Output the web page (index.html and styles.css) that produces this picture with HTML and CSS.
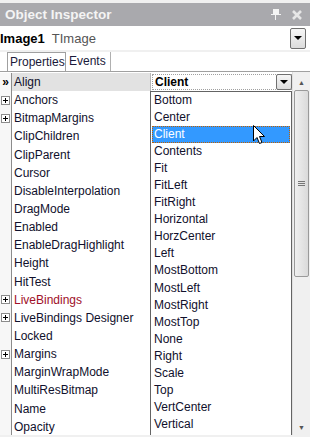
FILE: index.html
```html
<!DOCTYPE html>
<html lang="en">
<head>
    <meta charset="UTF-8">
    <title>Object Inspector</title>
    <link rel="stylesheet" href="styles.css">
</head>
<body>
    <div class="inspector">
        <div class="titlebar">
            <span class="title">Object Inspector</span>
            <span class="title-icons">
                <svg width="10" height="11" viewBox="0 0 10 11"><rect x="2" y="0" width="6" height="6" fill="#f4f4f4"/><rect x="0" y="5" width="10" height="1" fill="#f4f4f4"/><rect x="4" y="6" width="1" height="5" fill="#f4f4f4"/></svg>
                <svg width="10" height="10" viewBox="0 0 10 10"><path d="M1 1 L9 9 M9 1 L1 9" stroke="#e6e6e6" stroke-width="2.6"/></svg>
            </span>
        </div>

        <div class="selector">
            <span class="obj-name">Image1</span>
            <span class="obj-type">TImage</span>
            <span class="drop-btn big"><i class="tri"></i></span>
        </div>

        <div class="tabs">
            <span class="tab active">Properties</span>
            <span class="tab events">Events</span>
        </div>

        <div class="grid">
            <div class="rows">
                <div class="row selected"><span class="gut">&raquo;</span><span class="name">Align</span><span class="value"><span class="combo"><b>Client</b><span class="drop-btn"><i class="tri"></i></span></span></span></div>
                <div class="row"><span class="gut"><i class="plus"></i></span><span class="name">Anchors</span></div>
                <div class="row"><span class="gut"><i class="plus"></i></span><span class="name">BitmapMargins</span></div>
                <div class="row"><span class="gut"></span><span class="name">ClipChildren</span></div>
                <div class="row"><span class="gut"></span><span class="name">ClipParent</span></div>
                <div class="row"><span class="gut"></span><span class="name">Cursor</span></div>
                <div class="row"><span class="gut"></span><span class="name">DisableInterpolation</span></div>
                <div class="row"><span class="gut"></span><span class="name">DragMode</span></div>
                <div class="row"><span class="gut"></span><span class="name">Enabled</span></div>
                <div class="row"><span class="gut"></span><span class="name">EnableDragHighlight</span></div>
                <div class="row"><span class="gut"></span><span class="name">Height</span></div>
                <div class="row"><span class="gut"></span><span class="name">HitTest</span></div>
                <div class="row"><span class="gut"><i class="plus"></i></span><span class="name link">LiveBindings</span></div>
                <div class="row"><span class="gut"><i class="plus"></i></span><span class="name">LiveBindings Designer</span></div>
                <div class="row"><span class="gut"></span><span class="name">Locked</span></div>
                <div class="row"><span class="gut"><i class="plus"></i></span><span class="name">Margins</span></div>
                <div class="row"><span class="gut"></span><span class="name">MarginWrapMode</span></div>
                <div class="row"><span class="gut"></span><span class="name">MultiResBitmap</span></div>
                <div class="row"><span class="gut"></span><span class="name">Name</span></div>
                <div class="row"><span class="gut"></span><span class="name">Opacity</span></div>

                <ul class="droplist">
                    <li>Bottom</li>
                    <li>Center</li>
                    <li class="hot">Client</li>
                    <li>Contents</li>
                    <li>Fit</li>
                    <li>FitLeft</li>
                    <li>FitRight</li>
                    <li>Horizontal</li>
                    <li>HorzCenter</li>
                    <li>Left</li>
                    <li>MostBottom</li>
                    <li>MostLeft</li>
                    <li>MostRight</li>
                    <li>MostTop</li>
                    <li>None</li>
                    <li>Right</li>
                    <li>Scale</li>
                    <li>Top</li>
                    <li>VertCenter</li>
                    <li>Vertical</li>
                </ul>

                <svg class="cursor" width="13" height="20" viewBox="0 0 13 20"><path d="M0.5 0.5 L0.5 16 L4 12.5 L6.5 18.5 L9 17.5 L6.5 11.5 L11.5 11.5 Z" fill="#fff" stroke="#000" stroke-width="1"/></svg>
            </div>

            <div class="scrollbar">
                <span class="arrow">&#9650;</span>
                <div class="track">
                    <div class="thumb"><i class="grip"></i></div>
                </div>
                <span class="arrow">&#9660;</span>
            </div>
        </div>
    </div>
</body>
</html>
```

FILE: styles.css
```css
* {
    margin: 0;
    padding: 0;
    box-sizing: border-box;
}

body {
    font-family: "Liberation Sans", Arial, sans-serif;
    font-size: 12px;
    background: #f0f0f0;
    width: 310px;
    height: 437px;
    overflow: hidden;
}

.inspector {
    padding-top: 3px;
}

.titlebar {
    height: 23px;
    background: #a9a9ad;
    display: flex;
    align-items: center;
    justify-content: space-between;
    padding: 0 8px 0 5px;
}

.title {
    color: #f4f4f4;
    font-weight: bold;
    font-size: 13.5px;
}

.title-icons {
    display: flex;
    gap: 11px;
    align-items: center;
}

.selector {
    height: 24px;
    background: #fff;
    display: flex;
    align-items: center;
    padding-right: 4px;
    font-size: 13px;
}

.obj-name {
    font-weight: bold;
    color: #000;
}

.obj-type {
    color: #555;
    margin-left: 7px;
    flex: 1;
}

.drop-btn {
    width: 16px;
    height: 16px;
    border: 1px solid #707070;
    border-radius: 2px;
    background: linear-gradient(#f6f6f6, #dcdcdc);
    display: flex;
    align-items: center;
    justify-content: center;
}

.drop-btn.big {
    height: 21px;
}

.tri {
    width: 0;
    height: 0;
    border-left: 4px solid transparent;
    border-right: 4px solid transparent;
    border-top: 4px solid #000;
}

.tabs {
    margin-top: 2px;
    height: 20px;
    background: #fff;
    border-bottom: 1px solid #a0a0a0;
    display: flex;
    align-items: flex-end;
    padding-left: 7px;
}

.tab {
    height: 19px;
    width: 45px;
    padding-left: 3px;
    line-height: 18px;
    color: #1a1a3a;
    border-right: 1px solid #b0b0b0;
    white-space: nowrap;
}

.tab.active {
    width: 59px;
    border: 1px solid #a0a0a0;
    border-bottom: none;
    background: #fff;
    padding-left: 2px;
}

.grid {
    display: flex;
    height: 363px;
    background: #fff;
}

.rows {
    position: relative;
    width: 292px;
    overflow: hidden;
    padding-top: 1px;
}

.row {
    display: flex;
    height: 18.15px;
    align-items: center;
}

.gut {
    width: 12px;
    align-self: stretch;
    background: #f7f7f7;
    border-right: 1px solid #8c8c8c;
    display: flex;
    align-items: center;
    justify-content: center;
    font-size: 12px;
    font-weight: bold;
    color: #000;
}

.plus {
    width: 9px;
    height: 9px;
    border: 1px solid #8c8c8c;
    background: #fff;
    position: relative;
}

.plus::before,
.plus::after {
    content: "";
    position: absolute;
    background: #000;
}

.plus::before {
    left: 1px;
    top: 3px;
    width: 5px;
    height: 1px;
}

.plus::after {
    left: 3px;
    top: 1px;
    width: 1px;
    height: 5px;
}

.name {
    width: 138px;
    align-self: stretch;
    display: flex;
    align-items: center;
    padding-left: 2px;
    color: #10102c;
    white-space: nowrap;
}

.name.link {
    color: #a01028;
}

.row.selected .name {
    background: #e2e2e2;
}

.value {
    flex: 1;
    align-self: stretch;
    padding: 1px 0 1px 1px;
    border-left: 1px solid #b8b8b8;
}

.combo {
    height: 100%;
    display: flex;
    align-items: center;
    justify-content: space-between;
    padding-left: 2px;
    border: 1px dotted #a0a0a0;
    border-right: none;
    color: #000;
}

.droplist {
    position: absolute;
    left: 150px;
    top: 19px;
    width: 142px;
    height: 345px;
    list-style: none;
    background: #fff;
    border: 1px solid #646464;
    border-bottom: none;
    padding: 0 1px;
}

.droplist li {
    height: 17.05px;
    line-height: 17px;
    padding-left: 2px;
    color: #10102c;
}

.droplist li.hot {
    background: #3399ff;
    color: #fff;
    outline: 1px dotted #c06000;
    outline-offset: -1px;
}

.cursor {
    position: absolute;
    left: 253px;
    top: 53px;
}

.scrollbar {
    width: 18px;
    background: #f0f0f0;
    border-left: 1px solid #e0e0e0;
    display: flex;
    flex-direction: column;
    align-items: center;
}

.arrow {
    height: 18px;
    font-size: 7px;
    line-height: 22px;
    color: #555;
}

.track {
    flex: 1;
    width: 100%;
    padding: 0 1px;
}

.thumb {
    height: 187px;
    border: 1px solid #9a9a9a;
    border-radius: 2px;
    background: linear-gradient(90deg, #f0f0f0, #dadada);
    display: flex;
    align-items: center;
    justify-content: center;
}

.grip {
    width: 7px;
    height: 5px;
    border-top: 1px solid #777;
    border-bottom: 1px solid #777;
    position: relative;
}

.grip::after {
    content: "";
    position: absolute;
    left: 0;
    right: 0;
    top: 1px;
    border-top: 1px solid #777;
}
```
